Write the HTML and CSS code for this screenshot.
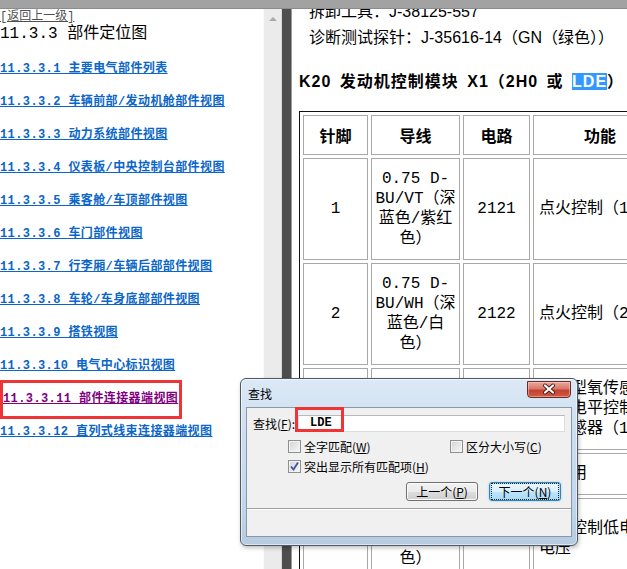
FILE: index.html
```html
<!DOCTYPE html>
<html lang="zh-cn">
<head>
    <meta charset="UTF-8">
    <title>11.3.3 部件定位图</title>
    <link rel="stylesheet" href="styles.css">
</head>
<body>

    <div class="topbar"></div>

    <div class="main">
        <!-- left: table of contents -->
        <div class="nav">
            <div class="back-row"><a class="back" href="#">[返回上一级]</a></div>
            <div class="nav-title">11.3.3 部件定位图</div>
            <ul class="toc">
                <li><a href="#">11.3.3.1 主要电气部件列表</a></li>
                <li><a href="#">11.3.3.2 车辆前部/发动机舱部件视图</a></li>
                <li><a href="#">11.3.3.3 动力系统部件视图</a></li>
                <li><a href="#">11.3.3.4 仪表板/中央控制台部件视图</a></li>
                <li><a href="#">11.3.3.5 乘客舱/车顶部件视图</a></li>
                <li><a href="#">11.3.3.6 车门部件视图</a></li>
                <li><a href="#">11.3.3.7 行李厢/车辆后部部件视图</a></li>
                <li><a href="#">11.3.3.8 车轮/车身底部部件视图</a></li>
                <li><a href="#">11.3.3.9 搭铁视图</a></li>
                <li><a href="#">11.3.3.10 电气中心标识视图</a></li>
                <li class="mark"><a class="seen" href="#">11.3.3.11 部件连接器端视图</a></li>
                <li><a href="#">11.3.3.12 直列式线束连接器端视图</a></li>
            </ul>
        </div>
        <div class="vscroll"><span class="arrow-up"></span></div>
        <div class="splitter"></div>

        <!-- right: document -->
        <div class="doc">
            <div class="doc-inner">
                <p class="tools">拆卸工具：J-38125-557</p>
                <p class="tools">诊断测试探针：J-35616-14（GN（绿色））</p>
                <h3>K20 发动机控制模块 X1（2H0 或 <mark class="hit">LDE</mark>）</h3>

                <table class="pins">
                    <colgroup>
                        <col class="c-pin">
                        <col class="c-wire">
                        <col class="c-circ">
                        <col class="c-func">
                    </colgroup>
                    <thead>
                        <tr>
                            <th>针脚</th>
                            <th>导线</th>
                            <th>电路</th>
                            <th>功能</th>
                        </tr>
                    </thead>
                    <tbody>
                        <tr>
                            <td>1</td>
                            <td>0.75 D-<br>BU/VT（深<br>蓝色/紫红<br>色）</td>
                            <td>2121</td>
                            <td class="func">点火控制（1）</td>
                        </tr>
                        <tr>
                            <td>2</td>
                            <td>0.75 D-<br>BU/WH（深<br>蓝色/白<br>色）</td>
                            <td>2122</td>
                            <td class="func">点火控制（2）</td>
                        </tr>
                        <tr>
                            <td>3</td>
                            <td>0.5 L-<br>BU/GY（浅<br>蓝色/灰色）</td>
                            <td>3113</td>
                            <td class="func">加热型氧传感<br>参考电平控制<br>氧传感器（1）</td>
                        </tr>
                        <tr>
                            <td>4</td>
                            <td>–</td>
                            <td>–</td>
                            <td class="func">未使用</td>
                        </tr>
                        <tr>
                            <td>5</td>
                            <td>0.5 D-GN/<br>WH（深绿<br>色）</td>
                            <td>2124</td>
                            <td class="func">油泵控制低电平<br>电压</td>
                        </tr>
                    </tbody>
                </table>
            </div>
        </div>
    </div>

    <!-- find dialog -->
    <div class="find">
        <div class="find-bar">
            <span class="find-caption">查找</span>
            <span class="find-close">
                <svg width="44" height="17" viewBox="0 0 44 17">
                    <path d="M18 4.5 L26 11.5 M26 4.5 L18 11.5" stroke="#4a1a14" stroke-width="4" stroke-linecap="round"/>
                    <path d="M18 4.5 L26 11.5 M26 4.5 L18 11.5" stroke="#fff" stroke-width="2.2" stroke-linecap="round"/>
                </svg>
            </span>
        </div>
        <div class="find-client">
            <div class="find-row">
                <label class="find-label">查找(<u>F</u>):</label>
                <div class="find-input">LDE</div>
            </div>
            <div class="opt-row">
                <span class="opt opt-first"><span class="cb"></span>全字匹配(<u>W</u>)</span>
                <span class="opt"><span class="cb"></span>区分大小写(<u>C</u>)</span>
            </div>
            <div class="opt-row opt-row2">
                <span class="opt"><span class="cb">
                    <svg width="11" height="11" viewBox="0 0 11 11"><path d="M2 5.5 L4.5 8.5 L9 1.5" fill="none" stroke="#3d52a0" stroke-width="1.8"/></svg>
                </span>突出显示所有匹配项(<u>H</u>)</span>
            </div>
            <div class="btn-row">
                <button class="btn" type="button">上一个(<u>P</u>)</button>
                <button class="btn btn-default" type="button"><span>下一个(<u>N</u>)</span></button>
            </div>
            <div class="find-status"></div>
        </div>
    </div>

    <div class="annot"></div>

</body>
</html>
```

FILE: styles.css
```css
body {
    margin: 0;
    background: #fff;
    font-family: "Liberation Sans", "Noto Sans CJK SC", sans-serif;
    color: #000;
    overflow: hidden;
}

.topbar {
    height: 8px;
    background: #a2a2a2;
    border-bottom: 1px solid #8c8c8c;
}

.main {
    display: flex;
    height: 560px;
}

/* left pane */
.nav {
    width: 263px;
    overflow: hidden;
    font-family: "Liberation Mono", "Noto Sans CJK SC", monospace;
    white-space: nowrap;
}

.back-row {
    margin-top: 1px;
    font-size: 12px;
    line-height: 14px;
}

.back {
    color: #505050;
}

.nav-title {
    font-size: 16px;
    line-height: 20px;
}

.toc {
    list-style: none;
    margin: 9px 0 0;
    padding: 0;
}

.toc li {
    font-size: 12px;
    line-height: 33px;
    font-weight: bold;
    letter-spacing: 0.4px;
}

.toc a {
    color: #0a66c8;
}

.toc a.seen {
    color: #800080;
}

.toc li.mark {
    width: 176px;
    margin: -3px 0;
    border: 3px solid #ee3434;
}

.vscroll {
    width: 17px;
    border-left: 1px solid #fafafa;
    background: #ebebeb;
}

.arrow-up {
    display: block;
    width: 0;
    height: 0;
    margin: 8px auto 0;
    border-left: 4px solid transparent;
    border-right: 4px solid transparent;
    border-bottom: 4px solid #a9a9a9;
}

.splitter {
    width: 9px;
    border-left: 1px solid #d8d8d8;
    background: #4e4e4e;
}

/* right pane */
.doc {
    flex: 1;
    min-width: 0;
    overflow: hidden;
    border-left: 1px solid #9a9a9a;
    padding-left: 7px;
    white-space: nowrap;
}

.doc-inner {
    margin-top: -10px;
}

.tools {
    margin: 0;
    padding-left: 10px;
    font-size: 16px;
    line-height: 26px;
}

.doc h3 {
    margin: 21px 0 19px;
    font-size: 16px;
    line-height: 20px;
    font-weight: bold;
    letter-spacing: 1px;
    word-spacing: 3px;
}

.hit {
    background: #3399ff;
    color: #fff;
}

.pins {
    table-layout: fixed;
    width: 372px;
    border: 1px solid #111;
    border-spacing: 3px;
}

.c-pin { width: 65px; }
.c-wire { width: 89px; }
.c-circ { width: 67px; }
.c-func { width: 134px; }

.pins th,
.pins td {
    box-sizing: border-box;
    border: 1px solid #a8a8a8;
    line-height: 20px;
    font-size: 16px;
}

.pins th {
    padding: 9px 4px;
    font-family: "Noto Sans CJK SC", sans-serif;
    font-weight: bold;
}

.pins td {
    padding: 10px 3px;
    font-family: "Liberation Mono", "Noto Sans CJK SC", monospace;
    text-align: center;
    vertical-align: middle;
}

.pins td.func {
    text-align: left;
    padding-left: 5px;
}

/* find dialog */
.find {
    position: absolute;
    left: 240px;
    top: 378px;
    width: 338px;
    height: 168px;
    box-sizing: border-box;
    display: flex;
    flex-direction: column;
    padding: 0 5px 8px 5px;
    border: 1px solid #4d5965;
    border-radius: 6px;
    background: linear-gradient(180deg, #dce9f6 0%, #cddff1 30%, #c3d8ee 70%, #b7cbe0 100%);
    box-shadow: inset 0 0 0 1px rgba(255, 255, 255, 0.55), 1px 2px 4px rgba(0, 0, 0, 0.25);
    font-family: "Noto Sans CJK SC", sans-serif;
    font-size: 12px;
}

.find-bar {
    height: 28px;
    display: flex;
    align-items: center;
    padding-left: 2px;
}

.find-close {
    position: absolute;
    right: 6px;
    top: 2px;
    width: 44px;
    height: 17px;
    box-sizing: border-box;
    border: 1px solid #6b2a22;
    border-radius: 0 0 4px 4px;
    background: linear-gradient(180deg, #e9a89d 0%, #d7786a 45%, #c4422f 55%, #cf5a45 100%);
    box-shadow: inset 0 0 0 1px rgba(255, 220, 210, 0.45);
}

.find-close svg {
    display: block;
    margin: -1px 0 0 -1px;
}

.find-client {
    flex: 1;
    display: flex;
    flex-direction: column;
    border: 1px solid #8a98a8;
    background: #f0f0f0;
}

.find-row {
    display: flex;
    align-items: center;
    height: 17px;
    margin: 7px 0 0 6px;
}

.find-label {
    width: 45px;
}

.find-input {
    width: 267px;
    height: 17px;
    box-sizing: border-box;
    padding-left: 11px;
    border: 1px solid #dadde2;
    border-top-color: #b5b8bd;
    background: #fff;
    font: bold 12px/15px "Liberation Mono", monospace;
}

.opt-row {
    display: flex;
    align-items: center;
    height: 13px;
    margin-top: 8px;
    padding-left: 41px;
}

.opt-row2 {
    margin-top: 7px;
}

.opt {
    display: flex;
    align-items: center;
    line-height: 13px;
}

.opt-first {
    width: 162px;
}

.cb {
    width: 13px;
    height: 13px;
    box-sizing: border-box;
    margin-right: 3px;
    border: 1px solid #8e8f8f;
    background: linear-gradient(135deg, #d3d3d3, #f8f8f8);
    box-shadow: inset 0 0 0 1px #f2f2f2;
}

.cb svg {
    display: block;
}

.btn-row {
    display: flex;
    justify-content: flex-end;
    gap: 11px;
    margin-top: 9px;
    padding-right: 10px;
}

.btn {
    width: 72px;
    height: 19px;
    padding: 0;
    border: 1px solid #707070;
    border-radius: 3px;
    background: linear-gradient(180deg, #f2f2f2 0%, #ebebeb 50%, #dddddd 50%, #cfcfcf 100%);
    box-shadow: inset 0 0 0 1px #fbfbfb;
    font-family: "Noto Sans CJK SC", sans-serif;
    font-size: 12px;
    line-height: 15px;
    color: #000;
}

.btn-default {
    border-color: #3c7fb1;
    background: linear-gradient(180deg, #eaf6fd 0%, #d9f0fc 50%, #bee6fd 50%, #a7d9f5 100%);
    box-shadow: inset 0 0 0 1px #a6e0f8, 0 0 2px #6fc6ef;
}

.btn-default span {
    display: block;
    margin: 0 2px;
    outline: 1px dotted #222;
}

.find-status {
    flex: 1;
    margin-top: 7px;
    border-top: 1px solid #a0a0a0;
    box-shadow: inset 0 1px #fff;
}

.annot {
    position: absolute;
    left: 295px;
    top: 407px;
    width: 49px;
    height: 25px;
    box-sizing: border-box;
    border: 3px solid #ee3434;
}
```
